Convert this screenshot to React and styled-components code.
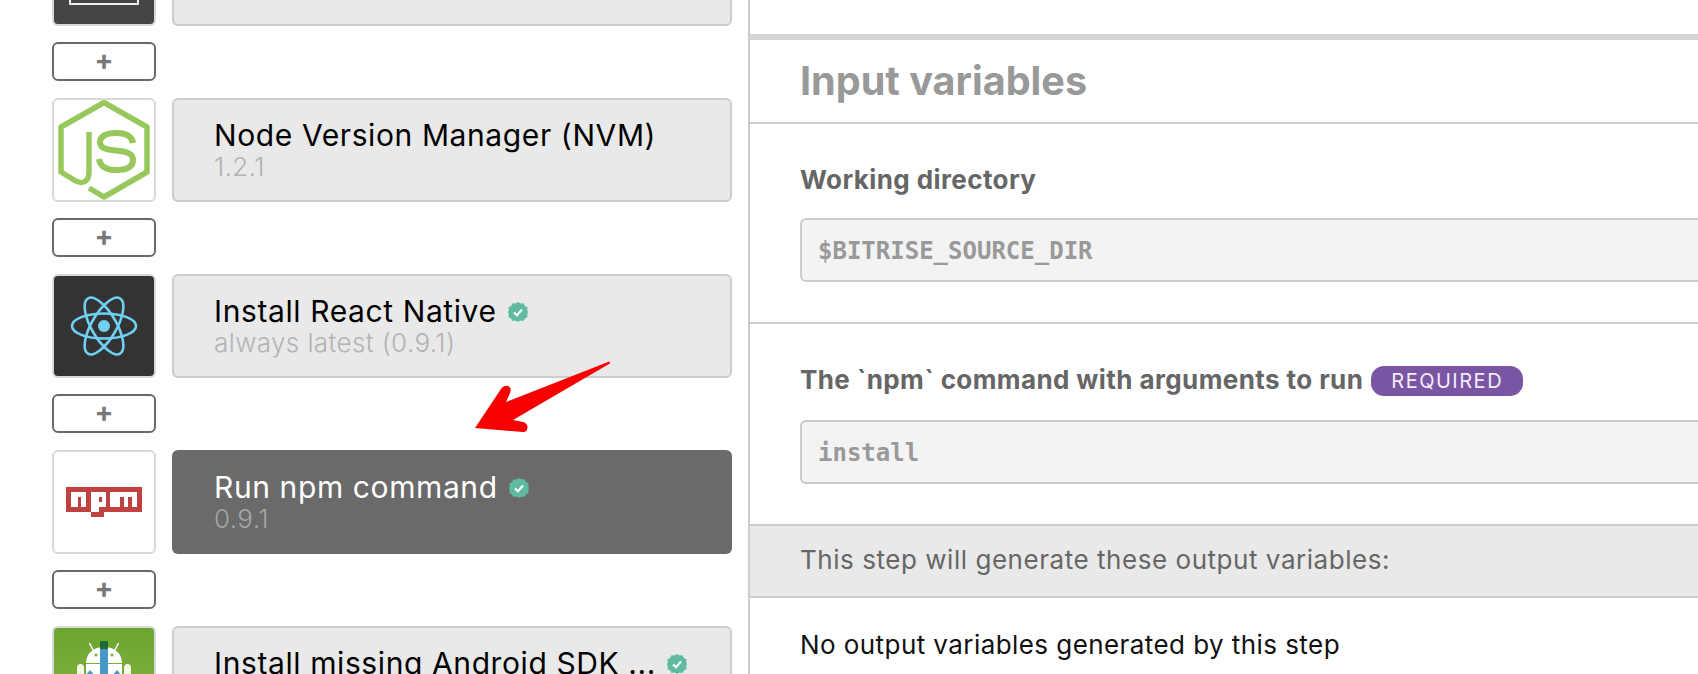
import React from 'react'
import styled, { createGlobalStyle } from 'styled-components'

const steps = [
    { title: '', version: '', logo: 'box', dark: true },
    { title: 'Node Version Manager (NVM)', version: '1.2.1', logo: 'node' },
    { title: 'Install React Native', version: 'always latest (0.9.1)', logo: 'react', verified: true, dark: true },
    { title: 'Run npm command', version: '0.9.1', logo: 'npm', verified: true, active: true },
    { title: 'Install missing Android SDK ...', version: '', logo: 'android', verified: true, green: true },
]

function NodeLogo() {
    return (
        <svg width="92" height="100" viewBox="0 0 92 100" fill="none" stroke="#98c85c" strokeWidth="5.5">
            <path d="M31 88L46 97L89 72V27L46 2.5L3 27V72L16 80C24 85 31 82 31 72V32" strokeLinejoin="round" />
            <path d="M75 43C74 36 68 33 58 33C47 33 42 37 42 42C42 56 75 45 75 60C75 67 68 70 58 70C48 70 42 66 41 59" strokeWidth="6" />
        </svg>
    )
}

function ReactLogo() {
    return (
        <svg width="68" height="62" viewBox="-34 -31 68 62" fill="none" stroke="#6fd0f2" strokeWidth="2.6">
            <ellipse rx="32" ry="12.5" />
            <ellipse rx="32" ry="12.5" transform="rotate(60)" />
            <ellipse rx="32" ry="12.5" transform="rotate(120)" />
            <circle r="6" fill="#6fd0f2" stroke="none" />
        </svg>
    )
}

function NpmLogo() {
    return (
        <svg width="76" height="30" viewBox="0 0 76 30">
            <path d="M0 0H76V25H38V30H25V25H0Z" fill="#c0413f" />
            <path d="M5 5H20V20H15V10H12V20H5Z M25 5H40V20H33V25H25Z M33 10V15H36V10Z M44 5H71V20H66V10H62V20H58V10H54V20H44Z" fill="#fff" fillRule="evenodd" />
        </svg>
    )
}

function AndroidLogo() {
    return (
        <svg width="60" height="60" viewBox="0 0 60 60">
            <path d="M19 9L15.5 2M41 9L44.5 2" stroke="#fff" strokeWidth="1.5" />
            <path d="M12 22C12 12 20 6 30 6C40 6 48 12 48 22Z" fill="#fff" />
            <rect x="12" y="23" width="36" height="37" fill="#fff" />
            <rect x="3" y="23" width="7" height="37" rx="3.5" fill="#f5f5ea" />
            <rect x="50" y="23" width="7" height="37" rx="3.5" fill="#f5f5ea" />
            <rect x="26" y="8" width="8" height="52" fill="#4499c6" />
            <rect x="26" y="0" width="8" height="8" fill="#1e6b34" />
            <circle cx="22" cy="14" r="1.6" fill="#7fb241" />
            <circle cx="38" cy="14" r="1.6" fill="#7fb241" />
            <path d="M11 35L16 29L21 35ZM38 35L43 29L48 35Z" fill="#4499c6" />
        </svg>
    )
}

function BoxLogo() {
    return (
        <svg width="70" height="31" viewBox="0 0 70 31" fill="none">
            <path d="M1 0V30H69V0" stroke="#eee" strokeWidth="2" />
        </svg>
    )
}

const logos = { node: NodeLogo, react: ReactLogo, npm: NpmLogo, android: AndroidLogo, box: BoxLogo }

function VerifiedBadge() {
    return (
        <Verified viewBox="0 0 20 20">
            <path d="M10 0L12.6 1.6L15.6 1.3L16.9 4L19.6 5.3L19.2 8.3L20 10L19.2 12.6L19.6 15L16.9 16.6L15.6 18.9L12.6 18.6L10 20L7.4 18.6L4.4 18.9L3.1 16.6L.4 15L.8 12.6L0 10L.8 8.3L.4 5.3L3.1 4L4.4 1.3L7.4 1.6Z" fill="#5fbb9f" />
            <path d="M6 10.5L9 13.2L14 7.5" fill="none" stroke="#fff" strokeWidth="2.2" />
        </Verified>
    )
}

function Arrow() {
    return (
        <ArrowMark width="136" height="74" viewBox="0 0 136 74">
            <path d="M133 2C135 1 136 3 134 4L38 60L48 62C54 63 54 72 48 72L0 68L26 29C30 23 38 26 35 33L31 42Z" fill="#f70000" />
        </ArrowMark>
    )
}

export default function App() {
    return (
        <>
            <GlobalStyle />
            <Page>
                <StepList>
                    {steps.map((step, i) => {
                        const Logo = logos[step.logo]
                        return (
                            <React.Fragment key={i}>
                                <StepRow>
                                    <IconBox $dark={step.dark} $green={step.green} $logo={step.logo}>
                                        <Logo />
                                    </IconBox>
                                    <StepCard $active={step.active}>
                                        <StepTitle>
                                            {step.title}
                                            {step.verified && <VerifiedBadge />}
                                        </StepTitle>
                                        {step.version && <StepVersion $active={step.active}>{step.version}</StepVersion>}
                                    </StepCard>
                                </StepRow>
                                {i < steps.length - 1 && (
                                    <AddRow>
                                        <AddButton>+</AddButton>
                                        {step.logo === 'react' && <Arrow />}
                                    </AddRow>
                                )}
                            </React.Fragment>
                        )
                    })}
                </StepList>
                <Details>
                    <SectionTitle>Input variables</SectionTitle>
                    <Field $height={200}>
                        <FieldLabel>Working directory</FieldLabel>
                        <ValueBox $gap={23}>$BITRISE_SOURCE_DIR</ValueBox>
                    </Field>
                    <Field $height={202}>
                        <FieldLabel>
                            The `npm` command with arguments to run
                            <Required>REQUIRED</Required>
                        </FieldLabel>
                        <ValueBox $gap={25}>install</ValueBox>
                    </Field>
                    <OutputHeader>This step will generate these output variables:</OutputHeader>
                    <OutputNote>No output variables generated by this step</OutputNote>
                </Details>
            </Page>
        </>
    )
}

const GlobalStyle = createGlobalStyle`
    html, body{
        margin:0;
        height:674px;
        overflow:hidden;
        background-color:#fff;
    }
    *{
        box-sizing:border-box;
    }
`

const Page = styled.div`
    display:flex;
    width:1698px;
    height:674px;
    overflow:hidden;
    font-family:Inter, "Liberation Sans", sans-serif;
`

const StepList = styled.div`
    flex:none;
    width:750px;
    height:674px;
    padding:0 16px 0 52px;
    border-right:2px solid #ccc;
    overflow:hidden;
`

const StepRow = styled.div`
    display:flex;
    gap:16px;
    height:104px;

    &:first-child{
        margin-top:-78px;
    }
`

const IconBox = styled.div`
    flex:none;
    display:flex;
    justify-content:center;
    align-items:${p => (p.$logo === 'box' || p.$logo === 'android' ? 'flex-start' : 'center')};
    width:104px;
    height:104px;
    overflow:hidden;
    padding-top:${p => (p.$logo === 'box' ? '50px' : p.$logo === 'android' ? '13px' : '0')};
    border:2px solid #d9d9d9;
    border-radius:6px;
    background:${p => (p.$green ? 'linear-gradient(#6ba430, #8ab942)' : p.$dark ? (p.$logo === 'box' ? '#444' : '#333') : '#fff')};
`

const StepCard = styled.div`
    flex:1;
    min-width:0;
    padding:${p => (p.$active ? '21px 0 0 42px' : '19px 0 0 40px')};
    border-radius:6px;
    border:${p => (p.$active ? 'none' : '2px solid #ccc')};
    background-color:${p => (p.$active ? '#6a6a6a' : '#e9e9e9')};
    color:${p => (p.$active ? '#fff' : '#000')};
`

const StepTitle = styled.div`
    display:flex;
    align-items:center;
    font-size:30px;
    line-height:33px;
    letter-spacing:.6px;
    white-space:nowrap;
`

const StepVersion = styled.div`
    font-size:26px;
    font-weight:300;
    line-height:30px;
    letter-spacing:.4px;
    color:${p => (p.$active ? '#a5a5a5' : '#b3b3b3')};
`

const Verified = styled.svg`
    flex:none;
    width:20px;
    height:20px;
    margin-left:11px;
`

const AddRow = styled.div`
    position:relative;
    height:39px;
    margin:16px 0 17px;
`

const AddButton = styled.div`
    display:flex;
    justify-content:center;
    align-items:center;
    width:104px;
    height:39px;
    padding-bottom:3px;
    border:2px solid #6a6a6a;
    border-radius:6px;
    font-size:28px;
    font-weight:700;
    color:#777;
    background-color:#fff;
`

const ArrowMark = styled.svg`
    position:absolute;
    left:423px;
    top:-34px;
`

const Details = styled.div`
    flex:1;
    min-width:0;
    margin-top:34px;
    border-top:6px solid #d5d5d5;
`

const SectionTitle = styled.h2`
    margin:0;
    height:84px;
    padding:0 0 0 50px;
    border-bottom:2px solid #ccc;
    font-size:39.6px;
    font-weight:700;
    line-height:82px;
    color:#999;
`

const Field = styled.div`
    height:${p => p.$height}px;
    padding:39px 0 0 50px;
    border-bottom:2px solid #ccc;
`

const FieldLabel = styled.div`
    display:flex;
    align-items:center;
    height:32px;
    font-size:26px;
    font-weight:700;
    letter-spacing:.4px;
    color:#666;
    white-space:nowrap;
`

const Required = styled.span`
    display:inline-flex;
    align-items:center;
    height:30px;
    margin:3px 0 0 8px;
    padding:0 20px;
    border-radius:13px;
    background-color:#7a55a3;
    color:#f3edf8;
    font-size:20px;
    font-weight:400;
    letter-spacing:1.5px;
`

const ValueBox = styled.div`
    height:64px;
    margin-top:${p => p.$gap}px;
    padding-left:16px;
    border:2px solid #ccc;
    border-right:none;
    border-radius:6px 0 0 6px;
    background-color:#f3f3f3;
    font-family:"DejaVu Sans Mono", "Liberation Mono", monospace;
    font-size:24px;
    font-weight:700;
    line-height:62px;
    color:#999;
`

const OutputHeader = styled.div`
    height:72px;
    padding-left:50px;
    border-bottom:2px solid #ccc;
    background-color:#e9e9e9;
    font-size:26px;
    line-height:68px;
    letter-spacing:.54px;
    color:#666;
`

const OutputNote = styled.div`
    padding:31px 0 0 50px;
    font-size:26px;
    line-height:32px;
    letter-spacing:.43px;
    color:#111;
`
